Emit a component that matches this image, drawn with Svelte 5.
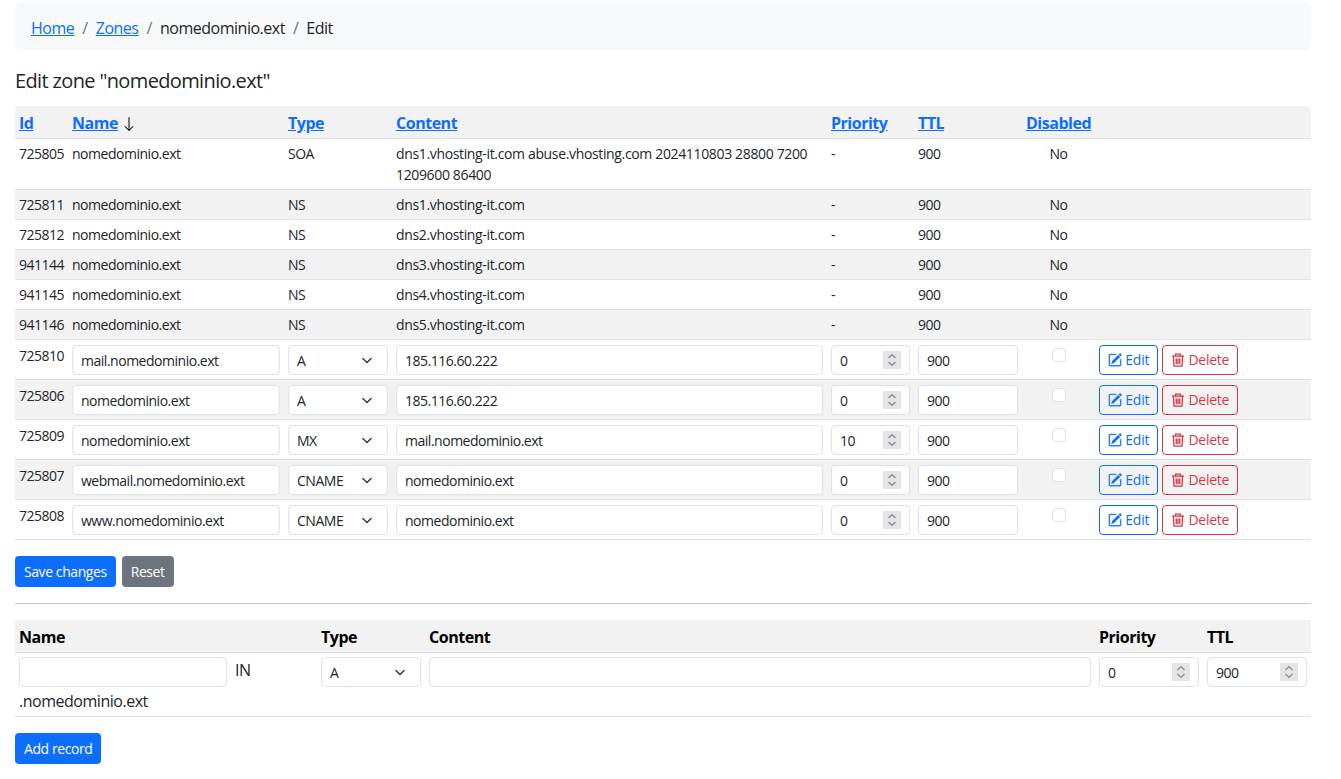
<script>
  const zone = 'nomedominio.ext';
  const plain = [
    { id: 725805, type: 'SOA', content: 'dns1.vhosting-it.com abuse.vhosting.com 2024110803 28800 7200 1209600 86400' },
    { id: 725811, type: 'NS', content: 'dns1.vhosting-it.com' },
    { id: 725812, type: 'NS', content: 'dns2.vhosting-it.com' },
    { id: 941144, type: 'NS', content: 'dns3.vhosting-it.com' },
    { id: 941145, type: 'NS', content: 'dns4.vhosting-it.com' },
    { id: 941146, type: 'NS', content: 'dns5.vhosting-it.com' }
  ];
  const editable = [
    { id: 725810, name: 'mail.nomedominio.ext', type: 'A', content: '185.116.60.222', prio: 0 },
    { id: 725806, name: 'nomedominio.ext', type: 'A', content: '185.116.60.222', prio: 0 },
    { id: 725809, name: 'nomedominio.ext', type: 'MX', content: 'mail.nomedominio.ext', prio: 10 },
    { id: 725807, name: 'webmail.nomedominio.ext', type: 'CNAME', content: 'nomedominio.ext', prio: 0 },
    { id: 725808, name: 'www.nomedominio.ext', type: 'CNAME', content: 'nomedominio.ext', prio: 0 }
  ];
  const types = ['A', 'MX', 'CNAME', 'NS', 'SOA'];
</script>

{#snippet spin(value)}
  <span class="num">
    <input class="field" type="text" {value} />
    <span class="spinner">
      <svg viewBox="0 0 18 18" width="18" height="18" fill="none" stroke="#8f8f96" stroke-width="1.4">
        <path d="M5.5 7 9 3.8 12.5 7" />
        <path d="M5.5 11 9 14.2 12.5 11" />
      </svg>
    </span>
  </span>
{/snippet}

{#snippet typeSelect(value)}
  <select class="field pick" {value}>
    {#each types as t}<option>{t}</option>{/each}
  </select>
{/snippet}

<main>
  <nav class="crumbs">
    <a href="#home">Home</a><span class="sep">/</span><a href="#zones">Zones</a><span class="sep">/</span><span>{zone}</span><span class="sep">/</span><span>Edit</span>
  </nav>

  <h2>Edit zone "{zone}"</h2>

  <form>
    <table class="records">
      <colgroup>
        <col style="width:53px" /><col style="width:216px" /><col style="width:108px" /><col style="width:435px" /><col style="width:87px" /><col style="width:108px" /><col style="width:73px" /><col />
      </colgroup>
      <thead>
        <tr>
          <th><a href="#id">Id</a></th>
          <th><a href="#name">Name </a>
            <svg class="arrow" viewBox="0 0 16 16" width="16" height="16" fill="currentColor"><path d="M8 1a.5.5 0 0 1 .5.5v11.793l3.146-3.147a.5.5 0 0 1 .708.708l-4 4a.5.5 0 0 1-.708 0l-4-4a.5.5 0 0 1 .708-.708L7.5 13.293V1.5A.5.5 0 0 1 8 1z" /></svg>
          </th>
          <th><a href="#type">Type</a></th>
          <th><a href="#content">Content</a></th>
          <th><a href="#priority">Priority</a></th>
          <th><a href="#ttl">TTL</a></th>
          <th><a href="#disabled">Disabled</a></th>
          <th></th>
        </tr>
      </thead>
      <tbody>
        {#each plain as r}
          <tr>
            <td>{r.id}</td>
            <td>{zone}</td>
            <td>{r.type}</td>
            <td class="content">{r.content}</td>
            <td>-</td>
            <td>900</td>
            <td class="mid">No</td>
            <td></td>
          </tr>
        {/each}
        {#each editable as r}
          <tr class="edit-row">
            <td>{r.id}</td>
            <td><input class="field" type="text" value={r.name} /></td>
            <td>{@render typeSelect(r.type)}</td>
            <td><input class="field" type="text" value={r.content} /></td>
            <td>{@render spin(r.prio)}</td>
            <td><input class="field" type="text" value="900" /></td>
            <td class="mid"><input class="check" type="checkbox" disabled /></td>
            <td>
              <div class="actions">
                <button type="button" class="btn outline-blue">
                  <svg viewBox="0 0 16 16" width="14" height="14" fill="currentColor" stroke="currentColor" stroke-width="0.4"><path d="M15.502 1.94a.5.5 0 0 1 0 .706L14.459 3.69l-2-2L13.502.646a.5.5 0 0 1 .707 0l1.293 1.293zm-1.75 2.456-2-2L4.939 9.21a.5.5 0 0 0-.121.196l-.805 2.414a.25.25 0 0 0 .316.316l2.414-.805a.5.5 0 0 0 .196-.12l6.813-6.814z" /><path fill-rule="evenodd" d="M1 13.5A1.5 1.5 0 0 0 2.5 15h11a1.5 1.5 0 0 0 1.5-1.5v-6a.5.5 0 0 0-1 0v6a.5.5 0 0 1-.5.5h-11a.5.5 0 0 1-.5-.5v-11a.5.5 0 0 1 .5-.5H9a.5.5 0 0 0 0-1H2.5A1.5 1.5 0 0 0 1 2.5v11z" /></svg>
                  Edit
                </button>
                <button type="button" class="btn outline-red">
                  <svg viewBox="0 0 16 16" width="14" height="14" fill="none" stroke="currentColor" stroke-width="1.5"><path d="M1 3.6h14M5.2 3.4V1.2h5.6v2.2M2.8 3.6l.6 11.4h9.2l.6-11.4M6 6.2v6.4M8 6.2v6.4M10 6.2v6.4" /></svg>
                  Delete
                </button>
              </div>
            </td>
          </tr>
        {/each}
      </tbody>
    </table>

    <div class="buttons">
      <button type="button" class="btn blue">Save changes</button>
      <button type="button" class="btn grey">Reset</button>
    </div>
  </form>

  <hr />

  <form>
    <table class="add">
      <colgroup>
        <col style="width:216px" /><col style="width:86px" /><col style="width:108px" /><col style="width:670px" /><col style="width:108px" /><col />
      </colgroup>
      <thead>
        <tr>
          <th colspan="2">Name</th>
          <th>Type</th>
          <th>Content</th>
          <th>Priority</th>
          <th>TTL</th>
        </tr>
      </thead>
      <tbody>
        <tr>
          <td><input class="field" type="text" /><div class="suffix">.{zone}</div></td>
          <td class="in">IN</td>
          <td>{@render typeSelect('A')}</td>
          <td><input class="field" type="text" /></td>
          <td>{@render spin(0)}</td>
          <td>{@render spin(900)}</td>
        </tr>
      </tbody>
    </table>
    <button type="button" class="btn blue">Add record</button>
  </form>
</main>

<style>
  :global(body) {
    margin: 0;
    background: #fff;
    color: #212529;
    font-family: "Open Sans", "Noto Sans", sans-serif;
    font-size: 16px;
    line-height: 1.5;
    letter-spacing: -0.03em;
  }
  main {
    padding: 2px 30px 0 15px;
  }
  a {
    color: #0d6efd;
  }
  .crumbs {
    display: flex;
    align-items: center;
    box-sizing: border-box;
    height: 48px;
    padding: 3px 16px 0;
    background: #f8f9fa;
    border-radius: 6px;
  }
  .sep {
    padding: 0 8px;
    color: #6c757d;
  }
  h2 {
    margin: 19px 0 13px;
    font-size: 20px;
    font-weight: 400;
    line-height: 24px;
    letter-spacing: -0.032em;
  }
  table {
    width: 100%;
    border-collapse: collapse;
    table-layout: fixed;
  }
  th {
    padding: 5px 4px 3px;
    text-align: left;
    font-weight: 700;
    background: #f2f2f2;
    color: #000;
    border-bottom: 1px solid #dee2e6;
  }
  .arrow {
    vertical-align: -3px;
    margin-left: -1px;
  }
  td {
    padding: 4px;
    vertical-align: top;
    border-bottom: 1px solid #dee2e6;
  }
  .records td {
    font-size: 14px;
  }
  .records .content {
    letter-spacing: -0.025em;
  }
  .records tbody tr:nth-child(even) td {
    background: #f2f2f2;
  }
  .records .edit-row td {
    padding-top: 5px;
  }
  .mid {
    text-align: center;
  }
  .field {
    display: block;
    box-sizing: border-box;
    width: 100%;
    height: 30px;
    padding: 4px 8px;
    font: inherit;
    font-size: 14px;
    letter-spacing: inherit;
    color: #212529;
    background: #fff;
    border: 1px solid #dee2e6;
    border-radius: 4px;
  }
  .pick {
    appearance: none;
    padding-right: 28px;
    background-image: url("data:image/svg+xml,%3csvg xmlns='http://www.w3.org/2000/svg' viewBox='0 0 16 16'%3e%3cpath fill='none' stroke='%23343a40' stroke-linecap='round' stroke-linejoin='round' stroke-width='2' d='m2 5 6 6 6-6'/%3e%3c/svg%3e");
    background-repeat: no-repeat;
    background-position: right 13px center;
    background-size: 14px 11px;
  }
  .num {
    display: block;
    position: relative;
  }
  .spinner {
    position: absolute;
    top: 6px;
    right: 9px;
    width: 18px;
    height: 18px;
    background: #e4e4e8;
  }
  .spinner svg {
    display: block;
  }
  .check {
    appearance: none;
    display: block;
    box-sizing: border-box;
    width: 14px;
    height: 14px;
    margin: 3px auto 0;
    background: #fff;
    border: 1px solid #dee2e6;
    border-radius: 4px;
  }
  .actions {
    display: flex;
    gap: 4px;
  }
  .btn {
    display: inline-block;
    box-sizing: border-box;
    padding: 4px 8px;
    font: inherit;
    font-size: 14px;
    line-height: 21px;
    letter-spacing: -0.03em;
    border: 1px solid transparent;
    border-radius: 4px;
  }
  .actions .btn {
    height: 30px;
    line-height: 20px;
    padding: 3px 8px;
    background: transparent;
    white-space: nowrap;
    letter-spacing: -0.02em;
  }
  .btn svg {
    vertical-align: -2px;
  }
  .blue {
    color: #fff;
    background: #0d6efd;
  }
  .grey {
    color: #fff;
    background: #6c757d;
  }
  .outline-blue {
    color: #0d6efd;
    border-color: #0d6efd;
  }
  .outline-red {
    color: #dc3545;
    border-color: #dc3545;
  }
  .buttons {
    display: flex;
    gap: 6px;
    margin-top: 16px;
  }
  hr {
    margin: 16px 0;
    border: 0;
    border-top: 1px solid #c9c9c9;
  }
  .add td {
    padding-bottom: 3px;
  }
  .add .in {
    padding-top: 5px;
  }
  .suffix {
    margin-top: 2px;
  }
  .add {
    margin-bottom: 16px;
  }
</style>
